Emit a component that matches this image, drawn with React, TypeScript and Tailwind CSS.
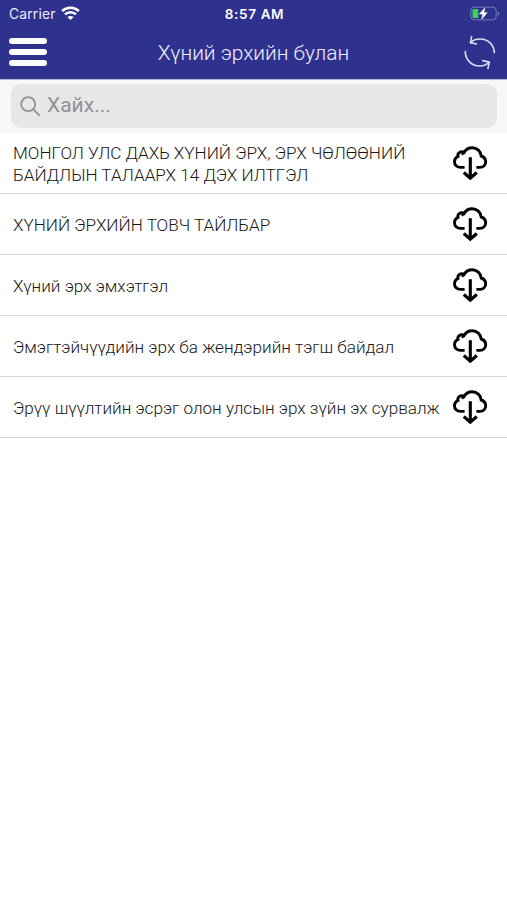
import React from "react";

const items: string[][] = [
  ["МОНГОЛ УЛС ДАХЬ ХҮНИЙ ЭРХ, ЭРХ ЧӨЛӨӨНИЙ", "БАЙДЛЫН ТАЛААРХ 14 ДЭХ ИЛТГЭЛ"],
  ["ХҮНИЙ ЭРХИЙН ТОВЧ ТАЙЛБАР"],
  ["Хүний эрх эмхэтгэл"],
  ["Эмэгтэйчүүдийн эрх ба жендэрийн тэгш байдал"],
  ["Эрүү шүүлтийн эсрэг олон улсын эрх зүйн эх сурвалж"],
];

function CloudDownload() {
  return (
    <svg className="h-[36px] w-[36px] shrink-0" viewBox="0 0 36 36" fill="none" stroke="#000" strokeWidth="2.9">
      <path d="M12.6 22.4H8.6C4.8 22.4 2.5 19.8 2.5 16.7C2.5 14.2 3.9 12.3 6 11.5C5 8.3 8.4 5.6 12.1 7.5C13.8 4.5 16.8 2.8 20.2 2.8C25 2.8 28.8 6.2 29.2 11C32 11.9 33.7 14.1 33.7 16.8C33.7 19.9 31.3 22.4 28 22.4H24.4" />
      <path d="M12 6.8L10.1 10" strokeWidth="2.2" />
      <path d="M18.3 12.2V33" strokeWidth="3.1" />
      <path d="M11.8 27.5L18.3 33.2L24.8 27.5" strokeWidth="3.2" />
    </svg>
  );
}

function Wifi() {
  return (
    <svg className="h-[15px] w-[19px]" viewBox="0 0 19 15" fill="none" stroke="white" strokeWidth="2.5">
      <path d="M1.1 5.1C5.8.6 13.2.6 17.9 5.1" />
      <path d="M4 8.4C7.1 5.4 11.9 5.4 15 8.4" />
      <path d="M6.4 11.1C8.1 9.5 10.9 9.5 12.6 11.1L9.5 14Z" fill="white" stroke="none" />
    </svg>
  );
}

function Battery() {
  return (
    <svg className="h-[16px] w-[31px]" viewBox="0 0 31 16" fill="none">
      <rect x="1.8" y="1.2" width="25.4" height="12.6" rx="3.2" stroke="#7778b4" />
      <rect x="3.5" y="2.9" width="5.8" height="9.2" rx="1.2" fill="#36d45c" />
      <path d="M28.7 5.5V9.5Q30.3 8.8 30.3 7.5T28.7 5.5Z" fill="#7778b4" />
      <path d="M15.8 2L10.4 8.1H13.8L12.8 12.9L18.2 6.7H14.8Z" fill="white" stroke="white" strokeWidth=".6" />
    </svg>
  );
}

function Refresh() {
  return (
    <svg className="h-[36px] w-[34px]" viewBox="0 0 34 36" fill="none" stroke="#dcdcf3" strokeWidth="1.6" strokeLinecap="round" strokeLinejoin="round">
      <path d="M31.3 17.6C31 9.6 25 4 17.4 4C13.4 4 10 5.2 7.6 7.3" />
      <path d="M8.6 1.6L7.4 7.6L13.4 9" />
      <path d="M2.3 16.5C2.3 24.8 8.7 31 16.7 31C20.5 31 23.6 29.7 26 27.2" />
      <path d="M19.8 25.6L26.2 27.1L25 33.4" />
    </svg>
  );
}

export default function App() {
  return (
    <main className="h-[900px] w-[507px] overflow-hidden bg-white font-['Roboto','Noto_Sans',sans-serif]">
      <header className="h-[79px] bg-[#2f318f] text-white">
        <div className="grid h-[27px] grid-cols-3 items-center pr-[7px] pl-[9px] font-['Inter','Liberation_Sans',sans-serif]">
          <div className="flex items-center gap-[5px]">
            <span className="pt-px text-[13.8px] tracking-[0.2px] text-[#ececf8]">Carrier</span>
            <Wifi />
          </div>
          <span className="pt-px text-center text-[13.5px] font-semibold tracking-[0.65px]">8:57 AM</span>
          <div className="flex justify-end"><Battery /></div>
        </div>
        <div className="grid h-[52px] grid-cols-[48px_1fr_48px] items-center">
          <button className="flex flex-col gap-[5px] pb-[2px] pl-[9px]" aria-label="Menu">
            <span className="h-[6px] w-[38px] rounded-full bg-white" />
            <span className="h-[6px] w-[38px] rounded-full bg-white" />
            <span className="h-[6px] w-[38px] rounded-full bg-white" />
          </button>
          <h1 className="pt-[2px] text-center text-[20.85px] font-light text-[#eeeef9]">Хүний эрхийн булан</h1>
          <button className="flex justify-end pr-[10px]" aria-label="Refresh"><Refresh /></button>
        </div>
      </header>
      <section className="h-[54px] border-t border-[#b5b5da] bg-[#f7f7f7] pt-[4px] pr-[10px] pl-[11px]">
        <div className="flex h-[44px] items-center rounded-[10px] bg-[#e7e7e8] pl-[9px] text-[#929295]">
          <svg className="h-[21px] w-[21px]" viewBox="0 0 21 21" fill="none" stroke="currentColor" strokeWidth="1.8" strokeLinecap="round">
            <circle cx="8.2" cy="8.2" r="7" />
            <path d="M13.4 13.4L19.2 19.2" />
          </svg>
          <span className="ml-[6px] text-[21px]">Хайх...</span>
        </div>
      </section>
      <ul>
        {items.map((lines) => (
          <li key={lines[0]} className="flex h-[61.1px] items-center justify-between border-b border-[#d9d9d9] pr-[19px] pl-[13px] text-[17.13px] leading-[22px] font-light text-[#171717]">
            <div className="pt-[2px]">
              {lines.map((line) => <p key={line} className="whitespace-nowrap">{line}</p>)}
            </div>
            <CloudDownload />
          </li>
        ))}
      </ul>
    </main>
  );
}
